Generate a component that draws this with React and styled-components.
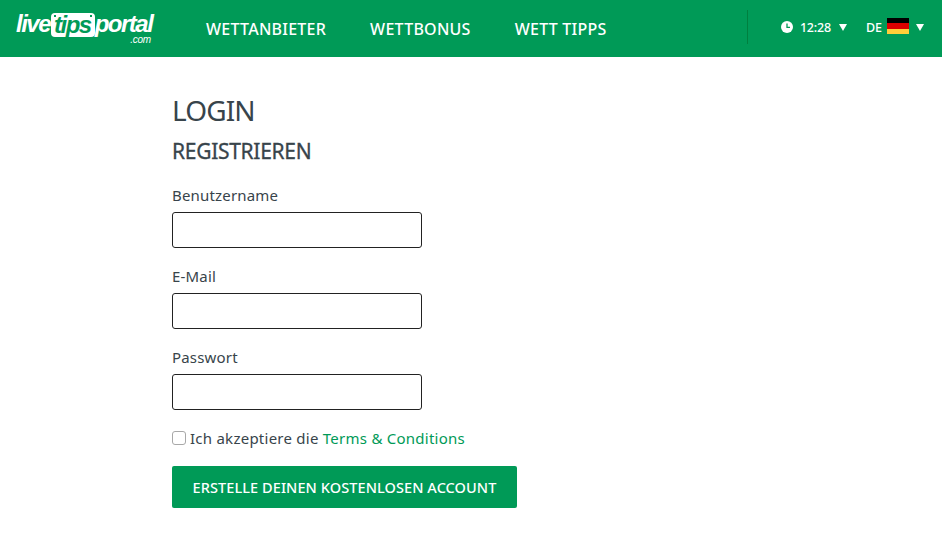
import React from "react";
import styled, { createGlobalStyle } from "styled-components";

const GlobalStyle = createGlobalStyle`
  html, body {
    margin: 0;
    padding: 0;
    background: #fff;
    font-family: "Noto Sans", "Open Sans", sans-serif;
  }
`;

const App = () => {
  return (
    <Page>
      <GlobalStyle />
      <Header>
        <Logo>
          <LogoWord>live</LogoWord>
          <LogoBox>tips</LogoBox>
          <LogoWord>portal</LogoWord>
          <LogoCom>.com</LogoCom>
        </Logo>
        <Nav>
          <NavLink>WETTANBIETER</NavLink>
          <NavLink>WETTBONUS</NavLink>
          <NavLink>WETT TIPPS</NavLink>
        </Nav>
        <Tools>
          <Clock viewBox="0 0 12 12">
            <circle cx="6" cy="6" r="6" fill="#fff" />
            <path d="M6 2.6V6.4H9" fill="none" stroke="#009a57" strokeWidth="1.3" />
          </Clock>
          <Time>12:28</Time>
          <Caret />
          <Lang>DE</Lang>
          <Flag>
            <FlagStripe $color="#000" />
            <FlagStripe $color="#dd0000" />
            <FlagStripe $color="#ffce3a" />
          </Flag>
          <Caret $tight />
        </Tools>
      </Header>
      <Main>
        <Title>LOGIN</Title>
        <SubTitle>REGISTRIEREN</SubTitle>
        <Field>
          <Label>Benutzername</Label>
          <Input type="text" />
        </Field>
        <Field>
          <Label>E-Mail</Label>
          <Input type="text" />
        </Field>
        <Field>
          <Label>Passwort</Label>
          <Input type="password" />
        </Field>
        <Terms>
          <Check type="checkbox" />
          <span>Ich akzeptiere die </span>
          <TermsLink>Terms &amp; Conditions</TermsLink>
        </Terms>
        <Submit>ERSTELLE DEINEN KOSTENLOSEN ACCOUNT</Submit>
      </Main>
    </Page>
  );
};

export default App;

const Page = styled.div`
  width: 942px;
  height: 538px;
  overflow: hidden;
  color: #38444b;
`;

const Header = styled.header`
  height: 57px;
  background-color: #009a57;
  display: flex;
  align-items: center;
  padding-left: 16px;
  box-sizing: border-box;
`;

const Logo = styled.div`
  position: relative;
  width: 138px;
  display: flex;
  align-items: center;
  color: #fff;
  font-family: "Liberation Sans", sans-serif;
  font-style: italic;
  font-weight: 700;
  font-size: 24px;
  letter-spacing: -1.5px;
  margin-top: -9px;
`;

const LogoWord = styled.span`
  line-height: 24px;
`;

const LogoBox = styled.span`
  position: relative;
  background: #fff;
  color: #009a57;
  border-radius: 4px;
  padding: 0 4px 0 3px;
  line-height: 24px;
  height: 24px;
  margin: 2px 0 0 1px;
  &::before,
  &::after {
    content: "";
    position: absolute;
    top: 2px;
    width: 2px;
    height: 2px;
    background: #009a57;
  }
  &::before {
    left: 3px;
  }
  &::after {
    right: 3px;
  }
`;

const LogoCom = styled.span`
  position: absolute;
  right: 3px;
  bottom: -6px;
  font-size: 10px;
  font-weight: 400;
  letter-spacing: -0.2px;
  line-height: 6px;
`;

const Nav = styled.nav`
  display: flex;
  gap: 44px;
  margin-left: 52px;
`;

const NavLink = styled.a`
  color: #fff;
  font-size: 16px;
  font-weight: 500;
  letter-spacing: 0.25px;
`;

const Tools = styled.div`
  margin-left: auto;
  height: 34px;
  border-left: 1px solid #00803f;
  display: flex;
  align-items: center;
  padding-left: 33px;
  padding-right: 18px;
  color: #fff;
  font-size: 12.5px;
  font-weight: 500;
  margin-top: -3px;
`;

const Clock = styled.svg`
  width: 12px;
  height: 12px;
  margin-right: 7px;
`;

const Time = styled.span`
  margin-right: 8px;
  letter-spacing: -0.2px;
`;

const Caret = styled.span`
  width: 0;
  height: 0;
  border-left: 4.5px solid transparent;
  border-right: 4.5px solid transparent;
  border-top: 7px solid #fff;
  margin-left: ${(p) => (p.$tight ? "7px" : "0")};
`;

const Lang = styled.span`
  margin-left: 19px;
  margin-right: 5px;
`;

const Flag = styled.span`
  width: 22px;
  height: 16px;
  margin-bottom: 2px;
  display: flex;
  flex-direction: column;
`;

const FlagStripe = styled.span`
  flex: 1;
  background: ${(p) => p.$color};
`;

const Main = styled.main`
  padding: 35px 0 0 172px;
`;

const Title = styled.h1`
  margin: 0;
  font-size: 28px;
  font-weight: 400;
  line-height: 36px;
  letter-spacing: -0.9px;
`;

const SubTitle = styled.h2`
  margin: 11px 0 0;
  font-size: 21px;
  font-weight: 400;
  line-height: 24px;
  letter-spacing: -0.3px;
  -webkit-text-stroke: 0.3px currentColor;
`;

const Field = styled.div`
  margin-top: 18px;
  display: flex;
  flex-direction: column;
  align-items: flex-start;
  &:first-of-type {
    margin-top: 22px;
  }
`;

const Label = styled.label`
  font-size: 15px;
  line-height: 20px;
  margin-bottom: 7px;
  letter-spacing: 0.18px;
`;

const Input = styled.input`
  width: 250px;
  height: 36px;
  box-sizing: border-box;
  border: 1px solid #222;
  border-radius: 3px;
  background: #fff;
`;

const Terms = styled.div`
  margin-top: 18px;
  display: flex;
  align-items: center;
  font-size: 15px;
  line-height: 20px;
  white-space: pre;
  letter-spacing: 0.25px;
`;

const Check = styled.input`
  appearance: none;
  box-sizing: border-box;
  width: 14px;
  height: 14px;
  margin: 0 4px 0 0;
  background: #fff;
  border: 1px solid #a8a8a8;
  border-radius: 3px;
`;

const TermsLink = styled.a`
  color: #009a57;
`;

const Submit = styled.button`
  display: block;
  margin-top: 18px;
  width: 345px;
  height: 42px;
  border: none;
  border-radius: 2px;
  background-color: #009a57;
  color: #fff;
  font-family: inherit;
  font-size: 14.5px;
  font-weight: 500;
  padding: 0;
  letter-spacing: 0.08px;
`;
